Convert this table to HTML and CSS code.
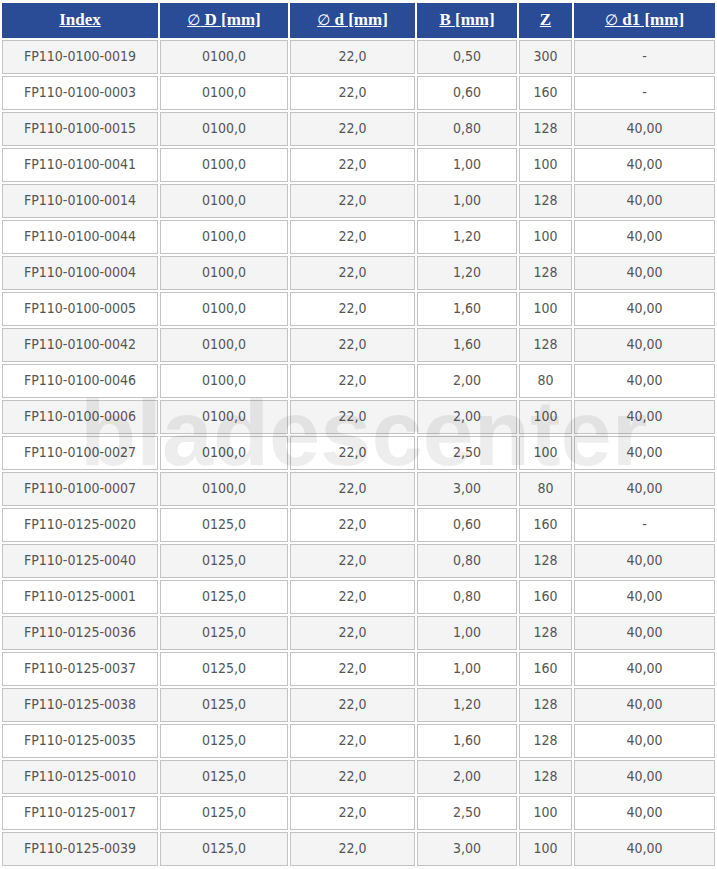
FILE: index.html
```html
<!DOCTYPE html>
<html>
<head>
<meta charset="utf-8">
<link rel="stylesheet" href="styles.css">
</head>
<body>
<div class="wrap">
<table class="grid">
<colgroup>
<col class="c1"><col class="c2"><col class="c3"><col class="c4"><col class="c5"><col class="c6">
</colgroup>
<thead>
<tr>
<th><a href="#">Index</a></th>
<th><a href="#"><span class="dia">∅</span> D [mm]</a></th>
<th><a href="#"><span class="dia">∅</span> d [mm]</a></th>
<th><a href="#">B [mm]</a></th>
<th><a href="#">Z</a></th>
<th><a href="#"><span class="dia">∅</span> d1 [mm]</a></th>
</tr>
</thead>
<tbody>
<tr><td>FP110-0100-0019</td><td>0100,0</td><td>22,0</td><td>0,50</td><td>300</td><td>-</td></tr>
<tr><td>FP110-0100-0003</td><td>0100,0</td><td>22,0</td><td>0,60</td><td>160</td><td>-</td></tr>
<tr><td>FP110-0100-0015</td><td>0100,0</td><td>22,0</td><td>0,80</td><td>128</td><td>40,00</td></tr>
<tr><td>FP110-0100-0041</td><td>0100,0</td><td>22,0</td><td>1,00</td><td>100</td><td>40,00</td></tr>
<tr><td>FP110-0100-0014</td><td>0100,0</td><td>22,0</td><td>1,00</td><td>128</td><td>40,00</td></tr>
<tr><td>FP110-0100-0044</td><td>0100,0</td><td>22,0</td><td>1,20</td><td>100</td><td>40,00</td></tr>
<tr><td>FP110-0100-0004</td><td>0100,0</td><td>22,0</td><td>1,20</td><td>128</td><td>40,00</td></tr>
<tr><td>FP110-0100-0005</td><td>0100,0</td><td>22,0</td><td>1,60</td><td>100</td><td>40,00</td></tr>
<tr><td>FP110-0100-0042</td><td>0100,0</td><td>22,0</td><td>1,60</td><td>128</td><td>40,00</td></tr>
<tr><td>FP110-0100-0046</td><td>0100,0</td><td>22,0</td><td>2,00</td><td>80</td><td>40,00</td></tr>
<tr><td>FP110-0100-0006</td><td>0100,0</td><td>22,0</td><td>2,00</td><td>100</td><td>40,00</td></tr>
<tr><td>FP110-0100-0027</td><td>0100,0</td><td>22,0</td><td>2,50</td><td>100</td><td>40,00</td></tr>
<tr><td>FP110-0100-0007</td><td>0100,0</td><td>22,0</td><td>3,00</td><td>80</td><td>40,00</td></tr>
<tr><td>FP110-0125-0020</td><td>0125,0</td><td>22,0</td><td>0,60</td><td>160</td><td>-</td></tr>
<tr><td>FP110-0125-0040</td><td>0125,0</td><td>22,0</td><td>0,80</td><td>128</td><td>40,00</td></tr>
<tr><td>FP110-0125-0001</td><td>0125,0</td><td>22,0</td><td>0,80</td><td>160</td><td>40,00</td></tr>
<tr><td>FP110-0125-0036</td><td>0125,0</td><td>22,0</td><td>1,00</td><td>128</td><td>40,00</td></tr>
<tr><td>FP110-0125-0037</td><td>0125,0</td><td>22,0</td><td>1,00</td><td>160</td><td>40,00</td></tr>
<tr><td>FP110-0125-0038</td><td>0125,0</td><td>22,0</td><td>1,20</td><td>128</td><td>40,00</td></tr>
<tr><td>FP110-0125-0035</td><td>0125,0</td><td>22,0</td><td>1,60</td><td>128</td><td>40,00</td></tr>
<tr><td>FP110-0125-0010</td><td>0125,0</td><td>22,0</td><td>2,00</td><td>128</td><td>40,00</td></tr>
<tr><td>FP110-0125-0017</td><td>0125,0</td><td>22,0</td><td>2,50</td><td>100</td><td>40,00</td></tr>
<tr><td>FP110-0125-0039</td><td>0125,0</td><td>22,0</td><td>3,00</td><td>100</td><td>40,00</td></tr>
</tbody>
</table>
<div class="watermark">bladescenter</div>
</div>
</body>
</html>
```

FILE: styles.css
```css
html, body {
  margin: 0;
  padding: 0;
  background: #ffffff;
}

.wrap {
  position: relative;
  width: 717px;
  padding-top: 1px;
}

.grid {
  width: 717px;
  border-collapse: separate;
  border-spacing: 2px;
  table-layout: fixed;
  font-family: "DejaVu Sans", sans-serif;
  font-stretch: condensed;
  font-size: 14px;
  color: #555555;
}

.c1 { width: 156px; }
.c2 { width: 128px; }
.c3 { width: 125px; }
.c4 { width: 100px; }
.c5 { width: 53px; }
.c6 { width: 141px; }

.grid th {
  height: 34px;
  padding: 0 0 1px 0;
  background: #2a4b96;
  text-align: center;
  vertical-align: middle;
  font-family: "Liberation Serif", serif;
  font-stretch: normal;
  font-weight: bold;
  font-size: 17px;
}

.grid th a {
  color: #ffffff;
  text-decoration: underline;
}

.dia {
  font-family: "DejaVu Sans", sans-serif;
  font-weight: normal;
  font-size: 15px;
}

.grid td {
  height: 29px;
  padding: 0 0 3px 0;
  border: 1px solid #c3c3c3;
  text-align: center;
  vertical-align: middle;
  background: #ffffff;
}

.grid tbody tr:nth-child(odd) td {
  background: #f4f4f4;
}

.watermark {
  position: absolute;
  left: 80px;
  top: 378px;
  font-family: "Liberation Sans", sans-serif;
  font-weight: bold;
  font-size: 92px;
  color: rgba(0, 0, 0, 0.07);
  pointer-events: none;
  white-space: nowrap;
  line-height: 1.2;
}
```
